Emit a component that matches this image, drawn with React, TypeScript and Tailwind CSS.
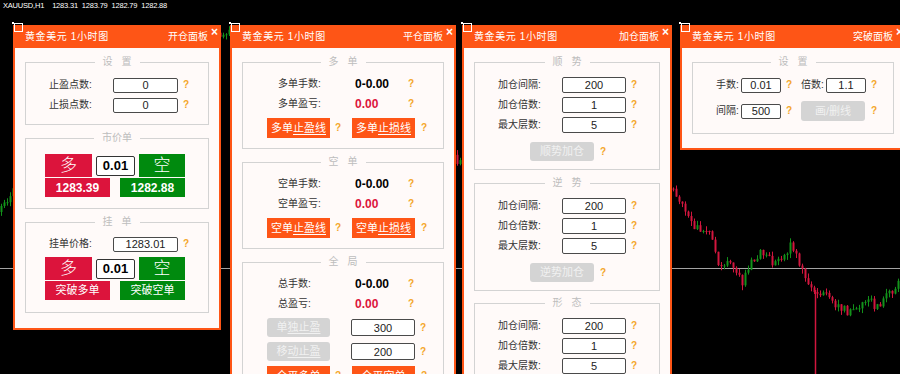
import React from "react";

const rnd = (n: number) => {
  const s = Math.sin(n * 12.9898 + 7.233) * 43758.5453;
  return s - Math.floor(s);
};

const keys: [number, number][] = [
  [0, 212], [6, 200], [14, 188], [60, 140], [120, 95], [180, 55], [226, 30],
  [300, 50], [380, 95], [458, 162], [520, 170], [600, 178], [672, 188],
  [683, 208], [697, 230], [703, 226], [713, 240], [718, 262], [730, 266],
  [743, 282], [750, 264], [763, 252], [777, 265], [790, 246], [798, 258],
  [805, 280], [813, 292], [827, 296], [847, 312], [867, 300], [877, 306],
  [893, 290], [900, 278],
];

function priceAt(x: number) {
  for (let i = 1; i < keys.length; i++) {
    const [x1, y1] = keys[i];
    const [x0, y0] = keys[i - 1];
    if (x <= x1) return y0 + ((x - x0) / (x1 - x0)) * (y1 - y0);
  }
  return keys[keys.length - 1][1];
}

function Chart() {
  const bars: { x: number; o: number; c: number; h: number; l: number }[] = [];
  let prev = priceAt(0);
  for (let i = 0; i < 300; i++) {
    const x = i * 3 + 1.5;
    const c = priceAt(x) + (rnd(i) - 0.5) * 9;
    const o = prev;
    const h = Math.min(o, c) - rnd(i + 500) * 5;
    const l = Math.max(o, c) + rnd(i + 900) * 5;
    bars.push({ x, o, c, h, l });
    prev = c;
  }
  return (
    <svg className="absolute inset-0" width={900} height={374}>
      <line x1={0} x2={900} y1={268.5} y2={268.5} stroke="#a3a3a3" strokeWidth={1} />
      {bars.map((b, i) => {
        const color = b.c < b.o ? "#12921a" : "#d2163e";
        return (
          <g key={i}>
            <line x1={b.x} x2={b.x} y1={b.h} y2={b.l} stroke={color} strokeWidth={1} />
            <rect x={b.x - 1} y={Math.min(b.o, b.c)} width={2} height={Math.max(1, Math.abs(b.c - b.o))} fill={color} />
          </g>
        );
      })}
      <line x1={815.5} x2={815.5} y1={290} y2={374} stroke="#d2163e" strokeWidth={1.5} />
    </svg>
  );
}

function Panel({ pos, title, name, children }: { pos: string; title: string; name: string; children: React.ReactNode }) {
  return (
    <div className={`absolute flex flex-col bg-[#fe5516] px-[2px] pb-[2px] ${pos}`}>
      <div className="absolute left-[1px] top-[-2px] h-[9px] w-[9px] border border-white" />
      <div className="absolute left-[-1px] top-[-3px] h-[2px] w-[2px] bg-white" />
      <span className="absolute right-[3px] top-[1px] text-[12px] font-bold leading-none text-white">×</span>
      <div className="flex h-[23px] shrink-0 items-center justify-between pl-[10px] pr-[11px] text-[10px] leading-none text-white">
        <span className="tracking-[0.6px]">{title}</span>
        <span>{name}</span>
      </div>
      <div className="flex-1 bg-[#fffaf9] px-[10px] pt-[7px]">{children}</div>
    </div>
  );
}

function Group({ legend, spaced, className, children }: { legend: string; spaced?: boolean; className?: string; children: React.ReactNode }) {
  return (
    <fieldset className={`min-w-0 border border-[#d3d3d3] ${className ?? ""}`}>
      <legend className="mx-auto px-[8px] text-[10px] leading-[14px] text-[#bdbdbd]">
        <span className={`flex ${spaced ? "gap-[9px]" : ""}`}>
          {legend.split("").map((ch, i) => (
            <span key={i}>{ch}</span>
          ))}
        </span>
      </legend>
      {children}
    </fieldset>
  );
}

const Q = () => <span className="text-[10px] font-bold leading-none text-[#f4a62a]">?</span>;

function Box({ value, className }: { value: string; className: string }) {
  return (
    <input
      readOnly
      value={value}
      className={`rounded-[2px] border border-[#4a4a4a] bg-white text-center text-[11px] leading-none text-[#222] outline-none ${className}`}
    />
  );
}

function InputRow({ label, value }: { label: string; value: string }) {
  return (
    <div className="flex h-[20px] items-center pl-[23px]">
      <span className="w-[64px] text-[10px] text-[#333]">{label}</span>
      <Box value={value} className="h-[16px] w-[64px]" />
      <span className="pl-[5px]">
        <Q />
      </span>
    </div>
  );
}

function StatRow({ label, value, red }: { label: string; value: string; red?: boolean }) {
  return (
    <div className="flex h-[20px] items-center pl-[35px]">
      <span className="w-[77px] text-[10px] text-[#333]">{label}</span>
      <span className={`w-[53px] text-[12px] font-bold ${red ? "text-[#dc143c]" : "text-black"}`}>{value}</span>
      <Q />
    </div>
  );
}

function OrangeBtn({ a, b }: { a: string; b: string }) {
  return (
    <button className="flex h-[20px] w-[63px] items-center justify-center bg-[#fe5516] text-[11px] leading-none text-white">
      {a}
      <span className="underline decoration-1 underline-offset-2">{b}</span>
    </button>
  );
}

function GrayBtn({ a, b, className }: { a: string; b: string; className: string }) {
  return (
    <button className={`flex items-center justify-center rounded-[3px] bg-[#d4d4d4] text-[11px] leading-none text-[#f1f1f1] ${className}`}>
      {a}
      {b && <span className="underline decoration-1 underline-offset-2">{b}</span>}
    </button>
  );
}

function TradeRows({ bottomLeft, bottomRight, bold }: { bottomLeft: string; bottomRight: string; bold?: boolean }) {
  return (
    <>
      <div className="flex gap-[4px] pl-[19px]">
        <button className="h-[23px] w-[47px] bg-[#dc143c] text-[17px] font-light leading-none text-white">多</button>
        <div className="flex items-center">
          <Box value="0.01" className="h-[20px] w-[39px] border-[#333] text-[13px] font-bold text-black" />
        </div>
        <button className="h-[23px] w-[46px] bg-[#008a0e] text-[17px] font-light leading-none text-white">空</button>
      </div>
      <div className="mt-[1px] flex gap-[10px] pl-[19px]">
        <div className={`flex h-[19px] w-[65px] items-center justify-center bg-[#dc143c] leading-none text-white ${bold ? "text-[12px] font-bold" : "text-[11px]"}`}>
          {bottomLeft}
        </div>
        <div className={`flex h-[19px] w-[65px] items-center justify-center bg-[#008a0e] leading-none text-white ${bold ? "text-[12px] font-bold" : "text-[11px]"}`}>
          {bottomRight}
        </div>
      </div>
    </>
  );
}

function SideGroup({ legend, side, className }: { legend: string; side: string; className?: string }) {
  return (
    <Group legend={legend} spaced className={`pb-[10px] ${className ?? ""}`}>
      <div className="pt-[5px]">
        <StatRow label={`${side}手数:`} value="0-0.00" />
        <StatRow label={`${side}盈亏:`} value="0.00" red />
        <div className="mt-[4px] flex h-[20px] items-center pl-[24px]">
          <OrangeBtn a={side} b="止盈线" />
          <span className="w-[22px] pl-[5px]">
            <Q />
          </span>
          <OrangeBtn a={side} b="止损线" />
          <span className="pl-[6px]">
            <Q />
          </span>
        </div>
      </div>
    </Group>
  );
}

function AddGroup({ legend, btn, className }: { legend: string; btn?: string; className?: string }) {
  return (
    <Group legend={legend} spaced className={`pb-[8px] ${className ?? ""}`}>
      <div className="pt-[6px]">
        <InputRow label="加仓间隔:" value="200" />
        <InputRow label="加仓倍数:" value="1" />
        <InputRow label="最大层数:" value="5" />
        {btn && (
          <div className="mt-[7px] flex h-[19px] items-center pl-[55px]">
            <GrayBtn a={btn} b="" className="h-[19px] w-[64px]" />
            <span className="pl-[6px]">
              <Q />
            </span>
          </div>
        )}
      </div>
    </Group>
  );
}

export default function App() {
  const title = "黄金美元 1小时图";
  return (
    <div className="relative h-[374px] w-[900px] overflow-hidden bg-black text-[10px] leading-[14px] font-['Liberation_Sans','Noto_Sans_CJK_SC',sans-serif]">
      <Chart />

      <div className="absolute left-[3px] top-[2px] flex gap-[4px] text-[7.5px] leading-none tracking-[-0.2px] text-white">
        <span className="mr-[4px]">XAUUSD,H1</span>
        <span>1283.31</span>
        <span>1283.79</span>
        <span>1282.79</span>
        <span>1282.88</span>
      </div>

      {/* 开仓面板 */}
      <Panel pos="left-[13px] top-[25px] h-[305px] w-[208px]" title={title} name="开仓面板">
        <Group legend="设置" spaced className="pb-[9px]">
          <div className="pt-[6px]">
            <div className="flex h-[20px] items-center pl-[23px]">
              <span className="w-[64px] text-[10px] text-[#333]">止盈点数:</span>
              <Box value="0" className="h-[15px] w-[65px]" />
              <span className="pl-[5px]">
                <Q />
              </span>
            </div>
            <div className="flex h-[20px] items-center pl-[23px]">
              <span className="w-[64px] text-[10px] text-[#333]">止损点数:</span>
              <Box value="0" className="h-[15px] w-[65px]" />
              <span className="pl-[5px]">
                <Q />
              </span>
            </div>
          </div>
        </Group>
        <Group legend="市价单" className="mt-[6px] pb-[11px]">
          <div className="pt-[9px]">
            <TradeRows bottomLeft="1283.39" bottomRight="1282.88" bold />
          </div>
        </Group>
        <Group legend="挂单" spaced className="mt-[6px] pb-[12px]">
          <div className="pt-[5px]">
            <div className="flex h-[20px] items-center pl-[23px]">
              <span className="w-[64px] text-[10px] text-[#333]">挂单价格:</span>
              <Box value="1283.01" className="h-[15px] w-[65px]" />
              <span className="pl-[5px]">
                <Q />
              </span>
            </div>
            <div className="mt-[3px]">
              <TradeRows bottomLeft="突破多单" bottomRight="突破空单" />
            </div>
          </div>
        </Group>
      </Panel>

      {/* 平仓面板 */}
      <Panel pos="left-[230px] top-[25px] h-[370px] w-[226px]" title={title} name="平仓面板">
        <SideGroup legend="多单" side="多单" />
        <SideGroup legend="空单" side="空单" className="mt-[6px]" />
        <Group legend="全局" spaced className="mt-[6px] pb-[10px]">
          <div className="pt-[5px]">
            <StatRow label="总手数:" value="0-0.00" />
            <StatRow label="总盈亏:" value="0.00" red />
            <div className="mt-[4px] flex h-[19px] items-center pl-[24px]">
              <GrayBtn a="单" b="独止盈" className="h-[19px] w-[63px]" />
              <Box value="300" className="ml-[21px] h-[17px] w-[64px] text-[11px]" />
              <span className="pl-[5px]">
                <Q />
              </span>
            </div>
            <div className="mt-[5px] flex h-[19px] items-center pl-[24px]">
              <GrayBtn a="移" b="动止盈" className="h-[19px] w-[63px]" />
              <Box value="200" className="ml-[21px] h-[17px] w-[64px] text-[11px]" />
              <span className="pl-[5px]">
                <Q />
              </span>
            </div>
            <div className="mt-[5px] flex h-[20px] items-center pl-[24px]">
              <OrangeBtn a="全平" b="多单" />
              <span className="w-[22px] pl-[5px]">
                <Q />
              </span>
              <OrangeBtn a="全平" b="空单" />
              <span className="pl-[6px]">
                <Q />
              </span>
            </div>
          </div>
        </Group>
      </Panel>

      {/* 加仓面板 */}
      <Panel pos="left-[462px] top-[25px] h-[370px] w-[210px]" title={title} name="加仓面板">
        <AddGroup legend="顺势" btn="顺势加仓" />
        <AddGroup legend="逆势" btn="逆势加仓" className="mt-[6px]" />
        <AddGroup legend="形态" className="mt-[5px]" />
      </Panel>

      {/* 突破面板 */}
      <Panel pos="left-[680px] top-[25px] h-[125px] w-[226px]" title={title} name="突破面板">
        <Group legend="设置" spaced className="pb-[11px]">
          <div className="pt-[6px]">
            <div className="flex h-[20px] items-center pl-[23px]">
              <span className="w-[25px] text-[10px] text-[#333]">手数:</span>
              <Box value="0.01" className="h-[15px] w-[40px]" />
              <span className="w-[20px] pl-[5px]">
                <Q />
              </span>
              <span className="w-[25px] text-[10px] text-[#333]">倍数:</span>
              <Box value="1.1" className="h-[15px] w-[40px]" />
              <span className="pl-[5px]">
                <Q />
              </span>
            </div>
            <div className="mt-[5px] flex h-[22px] items-center pl-[23px]">
              <span className="w-[25px] text-[10px] text-[#333]">间隔:</span>
              <Box value="500" className="h-[15px] w-[40px]" />
              <span className="w-[20px] pl-[5px]">
                <Q />
              </span>
              <GrayBtn a="画/删线" b="" className="h-[20px] w-[64px]" />
              <span className="pl-[6px]">
                <Q />
              </span>
            </div>
          </div>
        </Group>
      </Panel>
    </div>
  );
}
